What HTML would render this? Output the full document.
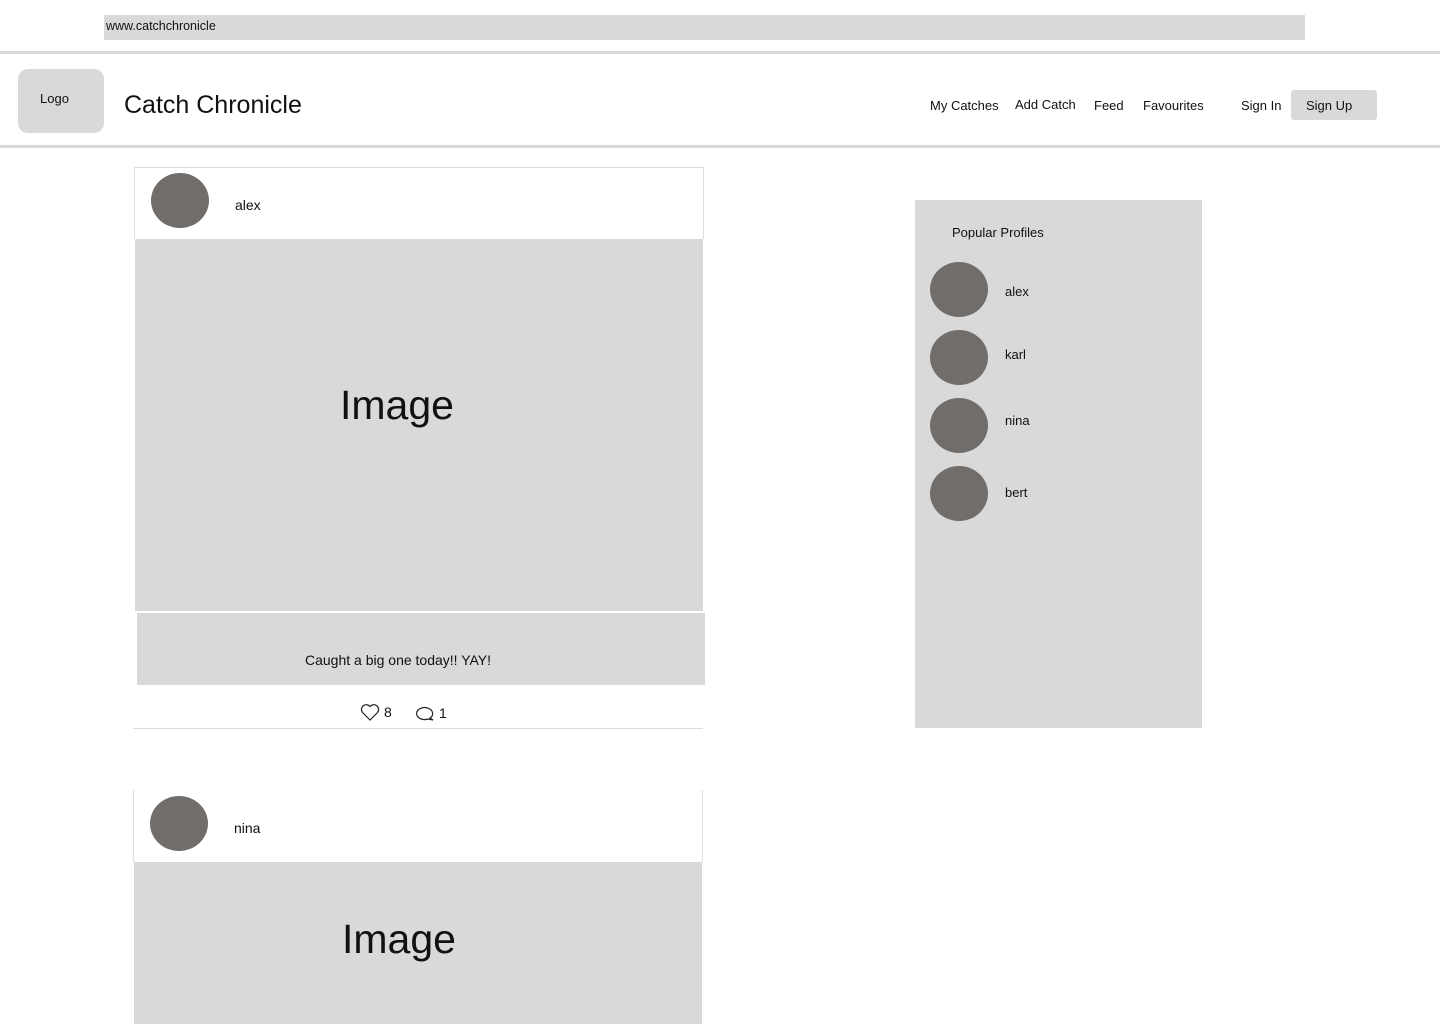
<!DOCTYPE html>
<html><head><style>
body{margin:0;width:1440px;height:1024px;position:relative;background:#fff;font-family:"Liberation Sans",sans-serif;color:#111;overflow:hidden}
.a{position:absolute}
.g{background:#d9d9d9}
.av{position:absolute;width:58px;height:55px;border-radius:50%;background:#716d6b}
.t{position:absolute;font-size:13px}
</style></head><body>
<div class="a g" style="left:104px;top:15px;width:1201px;height:25px"></div>
<div class="t" style="left:106px;top:19px;font-size:12.5px">www.catchchronicle</div>
<div class="a g" style="left:0;top:51px;width:1440px;height:3px"></div>
<div class="a g" style="left:18px;top:69px;width:86px;height:64px;border-radius:10px"></div>
<div class="t" style="left:40px;top:91px">Logo</div>
<div class="t" style="left:124px;top:91px;font-size:25px">Catch Chronicle</div>
<div class="t" style="left:930px;top:98px">My Catches</div>
<div class="t" style="left:1015px;top:97px">Add Catch</div>
<div class="t" style="left:1094px;top:98px">Feed</div>
<div class="t" style="left:1143px;top:98px">Favourites</div>
<div class="t" style="left:1241px;top:98px">Sign In</div>
<div class="a g" style="left:1291px;top:90px;width:86px;height:30px;border-radius:3px"></div>
<div class="t" style="left:1306px;top:98px">Sign Up</div>
<div class="a g" style="left:0;top:145px;width:1440px;height:3px"></div>

<div class="a" style="left:134px;top:167px;width:568px;height:71px;border:1px solid #ddd;border-bottom:none"></div>
<div class="av" style="left:151px;top:173px"></div>
<div class="t" style="left:235px;top:197px;font-size:14px">alex</div>
<div class="a g" style="left:135px;top:239px;width:568px;height:372px"></div>
<div class="t" style="left:340px;top:382px;font-size:41px">Image</div>
<div class="a g" style="left:137px;top:613px;width:568px;height:72px"></div>
<div class="t" style="left:305px;top:652px;font-size:14px">Caught a big one today!! YAY!</div>
<svg class="a" style="left:360px;top:703px" width="20" height="18" viewBox="0 0 20 18"><path d="M10 17 L2.5 9.5 A4.5 4.5 0 0 1 10 3.5 A4.5 4.5 0 0 1 17.5 9.5 Z" fill="none" stroke="#222" stroke-width="1.2"/></svg>
<div class="t" style="left:384px;top:704px;font-size:14px">8</div>
<svg class="a" style="left:415px;top:704px" width="20" height="18" viewBox="0 0 20 18"><path d="M15 14 A8 6 0 1 0 13 15 L18 16 Z" fill="none" stroke="#222" stroke-width="1.2"/></svg>
<div class="t" style="left:439px;top:705px;font-size:14px">1</div>
<div class="a" style="left:133px;top:728px;width:570px;height:1px;background:#ddd"></div>

<div class="a" style="left:133px;top:790px;width:568px;height:72px;border-left:1px solid #ddd;border-right:1px solid #ddd"></div>
<div class="av" style="left:150px;top:796px"></div>
<div class="t" style="left:234px;top:820px;font-size:14px">nina</div>
<div class="a g" style="left:134px;top:862px;width:568px;height:162px"></div>
<div class="t" style="left:342px;top:916px;font-size:41px">Image</div>

<div class="a g" style="left:915px;top:200px;width:287px;height:528px"></div>
<div class="t" style="left:952px;top:225px">Popular Profiles</div>
<div class="av" style="left:930px;top:262px"></div><div class="t" style="left:1005px;top:284px">alex</div>
<div class="av" style="left:930px;top:330px"></div><div class="t" style="left:1005px;top:347px">karl</div>
<div class="av" style="left:930px;top:398px"></div><div class="t" style="left:1005px;top:413px">nina</div>
<div class="av" style="left:930px;top:466px"></div><div class="t" style="left:1005px;top:485px">bert</div>
</body></html>
